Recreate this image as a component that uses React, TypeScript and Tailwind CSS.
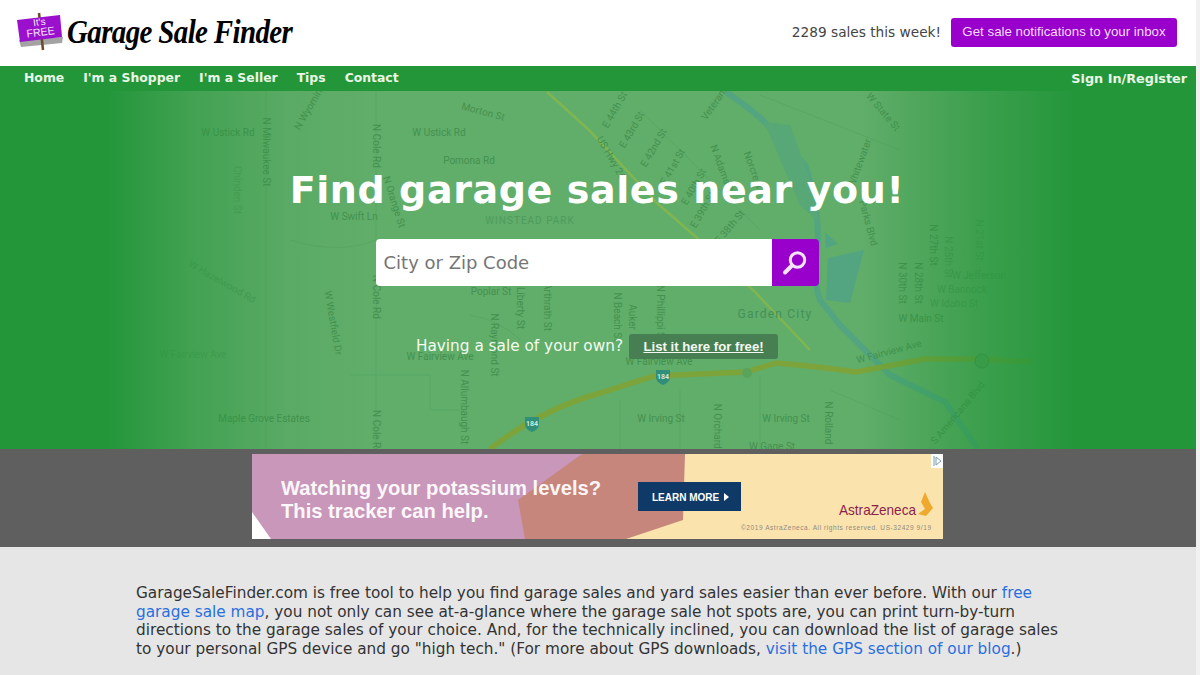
import React from 'react';

const sans = "font-['DejaVu_Sans',sans-serif]";

type Label = [string, number, number, number?, number?];

// map labels, in page coordinates: text, x, y, rotation, opacity
const labels: Label[] = [
  ['W Ustick Rd', 228, 133],
  ['N Milwaukee St', 266, 152, 90],
  ['N Cole Rd', 376, 146, 90],
  ['W Ustick Rd', 439, 133],
  ['Morton St', 483, 112, 15],
  ['Pomona Rd', 469, 161],
  ['N Wyoming', 310, 107, -60],
  ['Chinden St', 237, 190, 90, 0.5],
  ['N Orange St', 394, 202, 72],
  ['W Swift Ln', 354, 217],
  ['N Cole Rd', 376, 297, 90],
  ['W Westfield Dr', 333, 323, 80],
  ['W Hazelwood Rd', 222, 282, 30, 0.6],
  ['Poplar St', 491, 292],
  ['Liberty St', 520, 308, 90],
  ['Arthrath St', 547, 307, 90],
  ['N Raymond St', 494, 345, 90],
  ['W Fairview Ave', 440, 357],
  ['W Fairview Ave', 193, 355, 0, 0.5],
  ['N Allumbaugh St', 464, 407, 90],
  ['Maple Grove Estates', 264, 419],
  ['N Cole Rd', 376, 432, 90],
  ['US Hwy 26', 611, 158, 60],
  ['E 44th St', 615, 110, -60],
  ['E 43rd St', 632, 130, -60],
  ['E 42nd St', 654, 148, -60],
  ['E 41st St', 673, 167, -60],
  ['E 40th St', 694, 187, -60],
  ['E 39th St', 703, 210, -60],
  ['E 38th St', 730, 227, -50],
  ['N Adams St', 722, 170, 70],
  ['Norcrest', 753, 170, 70],
  ['Veterans', 715, 103, -55],
  ['W State St', 883, 112, 50],
  ['Whitewater', 860, 163, -70],
  ['Parks Blvd', 868, 223, 75],
  ['N 27th St', 933, 245, 90],
  ['N 30th St', 902, 283, 90],
  ['N 28th St', 918, 283, 90],
  ['N 25th St', 948, 257, 90, 0.7],
  ['N 21st St', 979, 240, 90, 0.6],
  ['W Jefferson', 979, 276, 0, 0.7],
  ['W Bannock', 962, 290, 0, 0.7],
  ['W Idaho St', 954, 304, 0, 0.7],
  ['W Main St', 921, 319],
  ['W Fairview Ave', 889, 352, -15],
  ['W Fairview Ave', 659, 362],
  ['W Irving St', 661, 419],
  ['W Irving St', 786, 419],
  ['N Orchard St', 717, 432, 90],
  ['N Rolland', 828, 423, 90],
  ['W Gage St', 772, 447],
  ['S Americana Blvd', 958, 413, -50],
  ['N Beach St', 617, 317, 90],
  ['Auker', 632, 317, 90],
  ['N Phillippi St', 660, 313, 90],
];

const thinRoads = [
  'M266 91V449',
  'M376 91V239M376 286V449',
  'M290 240Q340 255 376 240',
  'M470 315Q500 320 520 340',
  'M350 375H430V410H464',
  'M620 400V449M680 390V449M760 375V449',
  'M640 110L760 230',
  'M760 95L900 150',
  'M830 390L900 420',
];

const Shield = ({ x, y, n }: { x: number; y: number; n: string }) => (
  <g>
    <path d={`M${x - 7} ${y - 6}h14v8q-1 5-7 7q-6-2-7-7z`} fill="#2f8f7a" />
    <text x={x} y={y + 3} textAnchor="middle" fontSize="7" fontWeight="700" fill="#cfe8d6" fontFamily="Roboto, sans-serif">
      {n}
    </text>
  </g>
);

const HeroMap = () => (
  <svg className="absolute inset-0 h-full w-full" viewBox="0 91 1196 358" preserveAspectRatio="none">
    <defs>
      <linearGradient id="edgeFade" x1="0" x2="1196" y1="0" y2="0" gradientUnits="userSpaceOnUse">
        <stop offset="0.09" stopColor="#23963a" stopOpacity="1" />
        <stop offset="0.16" stopColor="#23963a" stopOpacity="0.5" />
        <stop offset="0.24" stopColor="#23963a" stopOpacity="0.12" />
        <stop offset="0.31" stopColor="#23963a" stopOpacity="0" />
        <stop offset="0.72" stopColor="#23963a" stopOpacity="0" />
        <stop offset="0.82" stopColor="#23963a" stopOpacity="0.6" />
        <stop offset="0.9" stopColor="#23963a" stopOpacity="1" />
      </linearGradient>
    </defs>
    <rect x="0" y="91" width="1196" height="358" fill="#61ad6a" />
    {thinRoads.map((d) => (
      <path key={d} d={d} fill="none" stroke="#59a764" strokeWidth="1" />
    ))}
    {/* river */}
    <path
      d="M726 92Q760 115 772 130L805 165Q818 200 818 240Q812 280 820 300L840 325L890 375L945 402L978 449"
      fill="none"
      stroke="#52a580"
      strokeWidth="6"
    />
    <path d="M764 122L790 125L812 185L818 222L800 205Z" fill="#58a877" />
    <path d="M828 258L864 250L850 303L826 300Z" fill="#52a580" />
    <path d="M825 232L838 244L826 248Z" fill="#52a580" />
    {/* highways */}
    <path d="M547 92L589 130L657 203L696 237L753 290L810 350" fill="none" stroke="#80b650" strokeWidth="2.5" />
    <path
      d="M490 449Q540 410 600 393L654 376L745 372Q760 368 776 363Q815 366 856 372L925 359H979L1032 362"
      fill="none"
      stroke="#7da43a"
      strokeWidth="5.5"
    />
    <Shield x={532} y={423} n="184" />
    <Shield x={663} y={376} n="184" />
    <circle cx="747" cy="373" r="5" fill="#5aa35b" />
    <circle cx="982" cy="361" r="7" fill="#5aa35b" stroke="#3f8f55" />
    {labels.map(([text, x, y, rot = 0, op = 1], i) => (
      <text
        key={i}
        x={x}
        y={y}
        dy="3"
        textAnchor="middle"
        fontSize="10"
        fill="#44914f"
        opacity={op}
        fontFamily="Roboto, sans-serif"
        transform={rot ? `rotate(${rot} ${x} ${y})` : undefined}
      >
        {text}
      </text>
    ))}
    <text x="775" y="318" textAnchor="middle" fontSize="12" letterSpacing="1.2" fill="#43915a" fontFamily="Roboto, sans-serif">
      Garden City
    </text>
    <text x="530" y="224" textAnchor="middle" fontSize="10" letterSpacing="1" fill="#4d9c5c" fontFamily="Roboto, sans-serif">
      WINSTEAD PARK
    </text>
    <rect x="0" y="91" width="1196" height="358" fill="url(#edgeFade)" />
  </svg>
);

const Logo = () => (
  <svg width="48" height="40" viewBox="0 0 48 40" className="shrink-0">
    <path d="M3 28L47 25L46 31L5 35Z" fill="#a3a3a3" />
    <path d="M23 1L27 38" stroke="#6b4a2a" strokeWidth="2.5" />
    <path d="M1 8L44 3L46 25L4 30Z" fill="#9a10cc" />
    <g fill="#f6e6fa" fontFamily="'Liberation Sans', sans-serif" transform="rotate(-7 23 16)">
      <text x="24" y="13.5" textAnchor="middle" fontSize="10">It's</text>
      <text x="24" y="24" textAnchor="middle" fontSize="11" textLength="28" lengthAdjust="spacingAndGlyphs">FREE</text>
    </g>
  </svg>
);

const AdBanner = () => (
  <svg width="691" height="85" viewBox="252 454 691 85" className="block shrink-0">
    <rect x="252" y="454" width="691" height="85" fill="#fbe3ae" />
    <path d="M252 454H582L525 539H252Z" fill="#c997b9" />
    <path d="M582 454H685L683 520L626 539H525L518 500Z" fill="#c7867c" />
    <path d="M252 512L271 539H252Z" fill="#fff" />
    <g fill="#fff" fontFamily="'Liberation Sans', sans-serif" fontSize="20.2" fontWeight="700" opacity="0.93">
      <text x="281" y="495">Watching your potassium levels?</text>
      <text x="281" y="518">This tracker can help.</text>
    </g>
    <rect x="638" y="482" width="103" height="29" fill="#0f3a68" />
    <text x="652" y="501" fontSize="10" fontWeight="700" fill="#fff" fontFamily="'Liberation Sans', sans-serif">LEARN MORE</text>
    <path d="M724 493L729 497L724 501Z" fill="#fff" />
    <text x="839" y="515" fontSize="15" fill="#8a1f4d" fontFamily="'Liberation Sans', sans-serif" textLength="77" lengthAdjust="spacingAndGlyphs">AstraZeneca</text>
    <path d="M925 492L930 503L933 508L926 516L918 514L925 509L921 502Z" fill="#eea92e" />
    <text x="741" y="530" fontSize="6.5" fill="#8d8a80" fontFamily="'Liberation Sans', sans-serif" textLength="190">©2019 AstraZeneca. All rights reserved. US-32429 9/19</text>
    <rect x="931" y="454" width="12" height="14" fill="#fff" />
    <path d="M934 456V466M936 457L941 461L936 465Z" fill="none" stroke="#7d9cb0" strokeWidth="1" />
  </svg>
);

const App: React.FC = () => {
  return (
    <div className={`flex h-[675px] w-[1200px] overflow-hidden bg-white ${sans}`}>
      <div className="w-[1196px] shrink-0">
        {/* Top bar */}
        <header className="flex h-[66px] items-center justify-between pb-[2px] pl-[16px] pr-[19px]">
          <div className="flex items-center gap-[3px]">
            <Logo />
            <span className="inline-block scale-y-[1.15] font-['Liberation_Serif',serif] text-[29px] leading-none font-bold text-black italic tracking-[-0.65px]">Garage Sale Finder</span>
          </div>
          <div className="flex items-center gap-[10px]">
            <span className="text-[13.7px] text-[#444]">2289 sales this week!</span>
            <a className="flex h-[29px] w-[226px] items-center justify-center rounded-[3px] bg-[#9900cc] font-['Liberation_Sans',sans-serif] text-[13.3px] text-[#f3dcf9]">
              Get sale notifications to your inbox
            </a>
          </div>
        </header>

        {/* Nav */}
        <nav className="flex h-[25px] items-center justify-between bg-[#23963a] pl-[24px] pr-[9px] text-[12.4px] font-bold text-[#eaf7e4]">
          <div className="flex gap-[19px]">
            <a>Home</a>
            <a>I'm a Shopper</a>
            <a>I'm a Seller</a>
            <a>Tips</a>
            <a>Contact</a>
          </div>
          <a className="text-[12.8px]">Sign In/Register</a>
        </nav>

        {/* Hero */}
        <section className="relative h-[358px] bg-[#23963a]">
          <HeroMap />
          <div className="relative flex flex-col items-center pr-[2px] pt-[75px]">
            <h1 className="text-[38px] leading-[48px] font-bold tracking-[0.6px] text-white">Find garage sales near you!</h1>
            <div className="mt-[25px] flex h-[47px] w-[443px]">
              <div className="flex flex-1 items-center rounded-l-[4px] bg-white pl-[8px] text-[18px] text-[#757575]">City or Zip Code</div>
              <button className="flex w-[47px] items-center justify-center rounded-r-[4px] bg-[#9900cc]">
                <svg width="26" height="26" viewBox="0 0 26 26" fill="none" stroke="#f6e4fb">
                  <circle cx="15.5" cy="10" r="7.2" strokeWidth="3" />
                  <path d="M10 15.5L3 22.5" strokeWidth="4" strokeLinecap="round" />
                </svg>
              </button>
            </div>
            <div className="mt-[48px] flex items-center gap-[6px]">
              <span className="text-[15.3px] text-[#f4fbef]">Having a sale of your own?</span>
              <a className="flex h-[25px] w-[149px] items-center justify-center rounded-[3px] bg-[#477f52] font-['Liberation_Sans',sans-serif] text-[13.2px] font-bold text-[#f3f7ef] underline">
                List it here for free!
              </a>
            </div>
          </div>
        </section>

        {/* Ad band */}
        <section className="flex h-[98px] justify-center bg-[#5f5f5f] pr-[2px] pt-[5px]">
          <AdBanner />
        </section>

        {/* Intro copy */}
        <section className="h-[128px] bg-[#e6e6e6] pl-[136px] pt-[37px] text-[15.3px] leading-[18.5px] text-[#333]">
          <p className="w-[930px]">
            GarageSaleFinder.com is free tool to help you find garage sales and yard sales easier than ever before. With our{' '}
            <a className="text-[#2a6fdf]">free garage sale map</a>, you not only can see at-a-glance where the garage sale hot spots are, you can print turn-by-turn directions to the garage sales of your choice. And, for the technically inclined, you can download the list of garage sales to your personal GPS device and go "high tech." (For more about GPS downloads,{' '}
            <a className="text-[#2a6fdf]">visit the GPS section of our blog</a>.)
          </p>
        </section>
      </div>
      <div className="w-[4px] bg-[#f1f1f1]" />
    </div>
  );
};

export default App;
